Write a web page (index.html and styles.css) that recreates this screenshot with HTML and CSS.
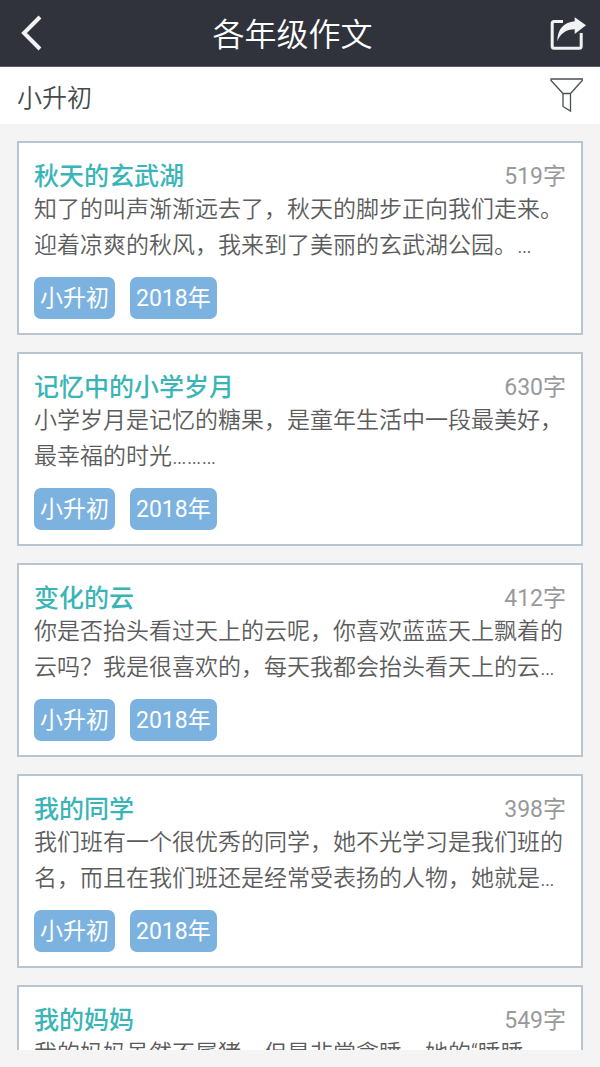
FILE: index.html
```html
<!DOCTYPE html>
<html lang="zh-CN">
<head>
    <meta charset="UTF-8">
    <meta name="viewport" content="width=device-width, initial-scale=1.0">
    <title>各年级作文</title>
    <link rel="stylesheet" href="styles.css">
</head>
<body>
    <header class="top-bar">
        <button class="icon-button" type="button" aria-label="返回">
            <svg width="36" height="36" viewBox="0 0 36 36">
                <path d="M23 2L7 18L23 34" fill="none" stroke="#f2f2f2" stroke-width="4"/>
            </svg>
        </button>
        <h1>各年级作文</h1>
        <button class="icon-button" type="button" aria-label="分享">
            <svg width="36" height="36" viewBox="0 0 36 36">
                <path d="M13 6.500H4.200q-2 0-2 2V31.200q0 2 2 2H29.200q2 0 2-2V18" fill="none" stroke="#f2f2f2" stroke-width="3"/>
                <path d="M36 10.300L24.700 2.300V6.300C14 7.500 7.500 13.500 7.300 26.300C10.500 18.500 16 14.500 24.700 14.300V19Z" fill="#f2f2f2"/>
            </svg>
        </button>
    </header>

    <div class="filter-bar">
        <span>小升初</span>
        <button class="icon-button" type="button" aria-label="筛选">
            <svg width="36" height="36" viewBox="0 0 36 36">
                <path d="M1 1H32.300V2.500L20.500 15.500H13L1 2.500ZM13 15.500V28.500L20.500 33V15.500" fill="none" stroke="#4a4f50" stroke-width="1.300"/>
            </svg>
        </button>
    </div>

    <main class="list">
        <article class="card">
            <div class="card-head">
                <h2>秋天的玄武湖</h2>
                <span class="count">519字</span>
            </div>
            <p>知了的叫声渐渐远去了，秋天的脚步正向我们走来。迎着凉爽的秋风，我来到了美丽的玄武湖公园。…</p>
            <div class="tags">
                <span class="tag">小升初</span>
                <span class="tag">2018年</span>
            </div>
        </article>

        <article class="card">
            <div class="card-head">
                <h2>记忆中的小学岁月</h2>
                <span class="count">630字</span>
            </div>
            <p>小学岁月是记忆的糖果，是童年生活中一段最美好，最幸福的时光………</p>
            <div class="tags">
                <span class="tag">小升初</span>
                <span class="tag">2018年</span>
            </div>
        </article>

        <article class="card">
            <div class="card-head">
                <h2>变化的云</h2>
                <span class="count">412字</span>
            </div>
            <p>你是否抬头看过天上的云呢，你喜欢蓝蓝天上飘着的云吗？我是很喜欢的，每天我都会抬头看天上的云…</p>
            <div class="tags">
                <span class="tag">小升初</span>
                <span class="tag">2018年</span>
            </div>
        </article>

        <article class="card">
            <div class="card-head">
                <h2>我的同学</h2>
                <span class="count">398字</span>
            </div>
            <p>我们班有一个很优秀的同学，她不光学习是我们班的名，而且在我们班还是经常受表扬的人物，她就是…</p>
            <div class="tags">
                <span class="tag">小升初</span>
                <span class="tag">2018年</span>
            </div>
        </article>

        <article class="card">
            <div class="card-head">
                <h2>我的妈妈</h2>
                <span class="count">549字</span>
            </div>
            <p>我的妈妈虽然不属猪，但是非常贪睡，她的“睡睡</p>
            <div class="tags">
                <span class="tag">小升初</span>
                <span class="tag">2018年</span>
            </div>
        </article>
    </main>
</body>
</html>
```
FILE: styles.css
```css
* {
    box-sizing: border-box;
}

body {
    margin: 0;
    height: 100vh;
    padding-bottom: 17px;
    display: flex;
    flex-direction: column;
    background-color: #f4f4f4;
    color: #5c5c5c;
    font-family: Roboto, "Noto Sans CJK SC", sans-serif;
    font-size: 23px;
}

h1, h2, p {
    margin: 0;
}

.icon-button {
    display: flex;
    padding: 0;
    border: none;
    background: none;
    cursor: pointer;
}

.top-bar {
    flex: none;
    display: flex;
    justify-content: space-between;
    align-items: center;
    height: 67px;
    padding: 0 14px 0 17px;
    background-color: #30333c;
    border-bottom: 1px solid #5d5a62;
}

.top-bar h1 {
    padding: 4px 18px 0 0;
    color: #fff;
    font-size: 32px;
    font-weight: 350;
    line-height: 40px;
}

.filter-bar {
    flex: none;
    display: flex;
    justify-content: space-between;
    align-items: center;
    height: 57px;
    padding: 0 14px 0 17px;
    background-color: #fff;
    color: #444a4a;
    font-size: 25px;
    font-weight: 350;
}

.list {
    flex: 1;
    min-height: 0;
    display: flex;
    flex-direction: column;
    gap: 17px;
    padding: 17px 17px 0;
    overflow-y: auto;
    scrollbar-width: none;
}

.card {
    flex: none;
    padding: 19px 15px 14px;
    background-color: #fff;
    border: 2px solid #b8c5d0;
}

.card-head {
    display: flex;
    justify-content: space-between;
    align-items: center;
    line-height: 30px;
}

.card-head h2 {
    color: #3ab5b7;
    font-size: 25px;
    font-weight: 500;
}

.count {
    color: #999;
}

.card p {
    min-height: 72px;
    font-weight: 350;
    line-height: 36px;
}

.tags {
    display: flex;
    gap: 15px;
    margin-top: 13px;
}

.tag {
    padding: 2px 6px 0;
    border-radius: 7px;
    background-color: #7cb2df;
    color: #fff;
    line-height: 40px;
}
```
